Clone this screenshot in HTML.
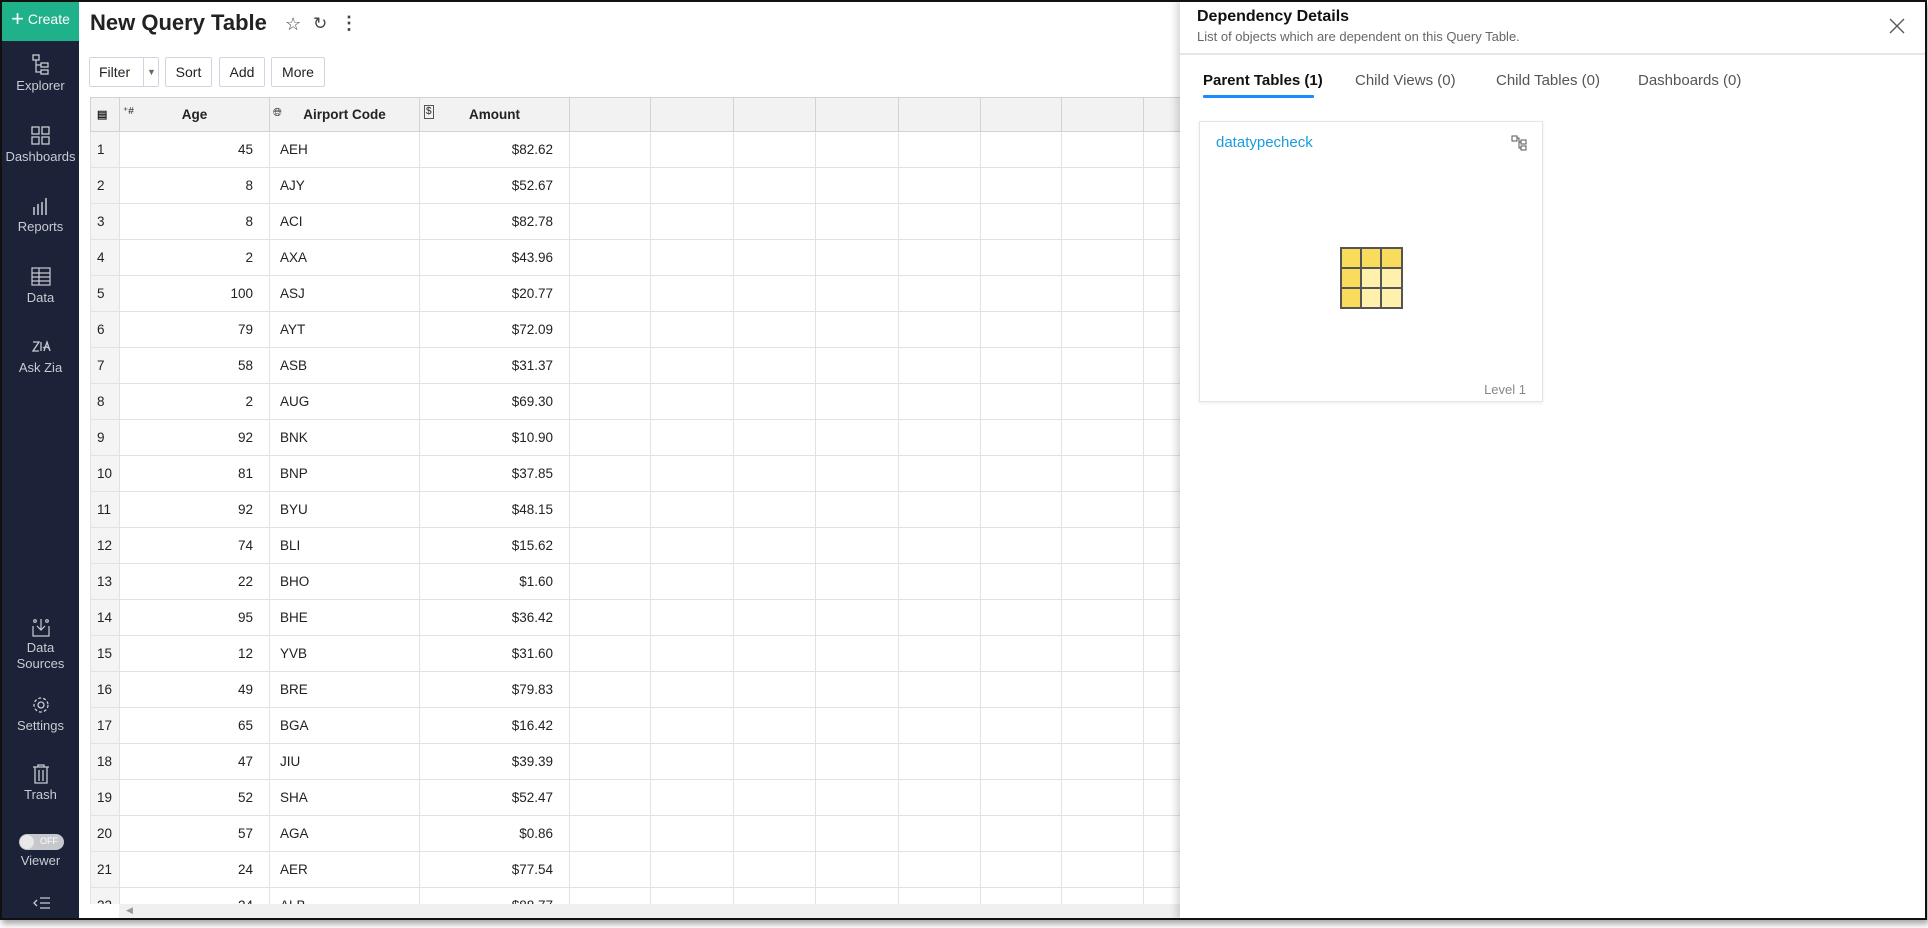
<!DOCTYPE html>
<html><head><meta charset="utf-8"><style>
*{box-sizing:border-box;margin:0;padding:0}
body{width:1928px;height:928px;background:#fff;font-family:"Liberation Sans",sans-serif;position:relative;overflow:hidden;color:#222}
#frame{position:absolute;left:0;top:0;width:1927px;height:920px;box-shadow:2px 4px 6px rgba(0,0,0,.35);overflow:hidden;background:#fff}
#bd{position:absolute;left:0;top:0;width:1927px;height:920px;border:2px solid #111;z-index:50;pointer-events:none}
#side{position:absolute;left:2px;top:0;width:77px;height:920px;background:#1c2237}
#create{position:absolute;left:0;top:0;width:77px;height:41px;background:#1fb28a;color:#fff;font-size:14px;line-height:38px;text-align:center}
.si{position:absolute;left:0;width:77px;text-align:center;color:#c9ccd4;font-size:13px;line-height:16px}
.si svg{display:block;margin:0 auto 2px}
#title{position:absolute;left:90px;top:10px;font-size:22px;font-weight:bold;color:#222}
.btn{position:absolute;top:57px;height:30px;border:1px solid #cfd6e2;border-radius:2px;font-size:14px;line-height:28px;text-align:center;color:#222;background:#fff}
#grid{position:absolute;left:90px;top:97px;width:1095px;border-collapse:collapse;table-layout:fixed;font-size:13.5px}
#grid td{height:36px;border:1px solid #e2e2e2;padding:0 10px;white-space:nowrap;overflow:hidden}
#grid tr.h td{height:34px;background:#f2f2f2;font-weight:bold;border-color:#d2d2d2}
#grid td.n{background:#f4f4f4;padding:0 0 0 6px}
#grid td.r{text-align:right;padding-right:16px}
#hs{position:absolute;left:90px;top:904px;width:1090px;height:15px;background:#f0f0f0}
#panel{position:absolute;left:1180px;top:0;width:747px;height:920px;background:#fff;box-shadow:-3px 0 8px rgba(0,0,0,.18)}
.tab{position:absolute;top:72px;font-size:15px;color:#555}
</style></head><body><div id="frame">
<div id="side">
<div id="create"><span style="font-size:22px;vertical-align:-2px">+</span> Create</div>
<div class="si" style="top:54px"><svg width="20" height="22" viewBox="0 0 20 22" fill="none" stroke="#c9ccd4" stroke-width="1.3"><rect x="2" y="1" width="6" height="5"/><rect x="10" y="9" width="7" height="4"/><rect x="10" y="16" width="7" height="4"/><path d="M5 6v12h5M5 11h5"/></svg>Explorer</div>
<div class="si" style="top:125px"><svg width="22" height="22" viewBox="0 0 22 22" fill="none" stroke="#c9ccd4" stroke-width="1.3"><rect x="2" y="2" width="7" height="7"/><rect x="12" y="2" width="7" height="7"/><rect x="2" y="12" width="7" height="7"/><rect x="12" y="12" width="7" height="7"/></svg>Dashboards</div>
<div class="si" style="top:195px"><svg width="22" height="22" viewBox="0 0 22 22" stroke="#c9ccd4" stroke-width="1.5"><path d="M4 20v-8M8 20v-11M12 20v-13M16 20v-17"/></svg>Reports</div>
<div class="si" style="top:266px"><svg width="22" height="22" viewBox="0 0 22 22" fill="none" stroke="#c9ccd4" stroke-width="1.2"><rect x="2" y="2" width="18" height="17"/><path d="M2 7h18M2 11h18M2 15h18M9 2v17"/></svg>Data</div>
<div class="si" style="top:336px"><svg width="22" height="22" viewBox="0 0 22 22" fill="none" stroke="#c9ccd4" stroke-width="1.3"><path d="M3 6h6l-6 9h6M11 6v9M14 15l3-9 3 9M13 12q4-3 7 2"/></svg>Ask Zia</div>
<div class="si" style="top:616px"><svg width="22" height="22" viewBox="0 0 22 22" fill="none" stroke="#c9ccd4" stroke-width="1.2"><path d="M3 10v10h16V10M11 3v11M7 10l4 4 4-4"/><circle cx="5" cy="5" r="1.3"/><circle cx="17" cy="5" r="1.3"/></svg>Data<br>Sources</div>
<div class="si" style="top:694px"><svg width="22" height="22" viewBox="0 0 22 22" fill="none" stroke="#c9ccd4" stroke-width="1.3"><circle cx="11" cy="11" r="3"/><circle cx="11" cy="11" r="7" stroke-dasharray="3 2"/></svg>Settings</div>
<div class="si" style="top:763px"><svg width="22" height="22" viewBox="0 0 22 22" fill="none" stroke="#c9ccd4" stroke-width="1.3"><path d="M3 4h16M8 4V2h6v2M5 4v16h12V4M9 7v11M13 7v11"/></svg>Trash</div>
<div style="position:absolute;left:17px;top:834px;width:45px;height:16px;border-radius:8px;background:#c6c8cc"><div style="position:absolute;left:1px;top:1px;width:14px;height:14px;border-radius:7px;background:#e8e8e8"></div><span style="position:absolute;right:6px;top:2px;font-size:9px;color:#fff">OFF</span></div>
<div class="si" style="top:853px">Viewer</div>
<svg style="position:absolute;left:31px;top:896px" width="18" height="14" viewBox="0 0 18 14" stroke="#c9ccd4" stroke-width="1.3" fill="none"><path d="M7 2h10M7 7h10M7 12h10M4 4L1 7l3 3"/></svg>
</div>
<div id="title">New Query Table</div>
<div style="position:absolute;left:285px;top:14px;font-size:18px;color:#444">☆</div>
<div style="position:absolute;left:313px;top:14px;font-size:17px;color:#444">↻</div>
<div style="position:absolute;left:340px;top:13px;font-size:18px;color:#444;font-weight:bold">⋮</div>
<div class="btn" style="left:89px;width:70px;text-align:left;padding-left:9px">Filter<span style="position:absolute;left:53px;top:0;height:28px;border-left:1px solid #cfd6e2;width:16px;font-size:9px;color:#666;text-align:center">▼</span></div>
<div class="btn" style="left:165px;width:47px">Sort</div>
<div class="btn" style="left:219px;width:46px">Add</div>
<div class="btn" style="left:271px;width:54px">More</div>
<table id="grid">
<colgroup><col style="width:29px"><col style="width:150px"><col style="width:150px"><col style="width:150px"><col style="width:81px"><col style="width:83px"><col style="width:82px"><col style="width:83px"><col style="width:82px"><col style="width:81px"><col style="width:82px"><col style="width:82px"></colgroup>
<tr class="h"><td class="n" style="font-size:11px;background:#f2f2f2">▤</td><td style="text-align:center;position:relative"><span style="position:absolute;left:3px;top:8px;font-size:10px;font-weight:normal">⁺#</span>Age</td><td style="text-align:center;position:relative"><span style="position:absolute;left:3px;top:9px;font-size:11px;font-weight:normal">🌐︎</span>Airport Code</td><td style="text-align:center;position:relative"><span style="position:absolute;left:4px;top:7px;font-size:10px;font-weight:normal;border:1px solid #555;padding:0 1px;line-height:12px">$</span>Amount</td><td></td><td></td><td></td><td></td><td></td><td></td><td></td><td></td></tr>
<tr><td class="n">1</td><td class="r">45</td><td>AEH</td><td class="r">$82.62</td><td></td><td></td><td></td><td></td><td></td><td></td><td></td><td></td></tr>
<tr><td class="n">2</td><td class="r">8</td><td>AJY</td><td class="r">$52.67</td><td></td><td></td><td></td><td></td><td></td><td></td><td></td><td></td></tr>
<tr><td class="n">3</td><td class="r">8</td><td>ACI</td><td class="r">$82.78</td><td></td><td></td><td></td><td></td><td></td><td></td><td></td><td></td></tr>
<tr><td class="n">4</td><td class="r">2</td><td>AXA</td><td class="r">$43.96</td><td></td><td></td><td></td><td></td><td></td><td></td><td></td><td></td></tr>
<tr><td class="n">5</td><td class="r">100</td><td>ASJ</td><td class="r">$20.77</td><td></td><td></td><td></td><td></td><td></td><td></td><td></td><td></td></tr>
<tr><td class="n">6</td><td class="r">79</td><td>AYT</td><td class="r">$72.09</td><td></td><td></td><td></td><td></td><td></td><td></td><td></td><td></td></tr>
<tr><td class="n">7</td><td class="r">58</td><td>ASB</td><td class="r">$31.37</td><td></td><td></td><td></td><td></td><td></td><td></td><td></td><td></td></tr>
<tr><td class="n">8</td><td class="r">2</td><td>AUG</td><td class="r">$69.30</td><td></td><td></td><td></td><td></td><td></td><td></td><td></td><td></td></tr>
<tr><td class="n">9</td><td class="r">92</td><td>BNK</td><td class="r">$10.90</td><td></td><td></td><td></td><td></td><td></td><td></td><td></td><td></td></tr>
<tr><td class="n">10</td><td class="r">81</td><td>BNP</td><td class="r">$37.85</td><td></td><td></td><td></td><td></td><td></td><td></td><td></td><td></td></tr>
<tr><td class="n">11</td><td class="r">92</td><td>BYU</td><td class="r">$48.15</td><td></td><td></td><td></td><td></td><td></td><td></td><td></td><td></td></tr>
<tr><td class="n">12</td><td class="r">74</td><td>BLI</td><td class="r">$15.62</td><td></td><td></td><td></td><td></td><td></td><td></td><td></td><td></td></tr>
<tr><td class="n">13</td><td class="r">22</td><td>BHO</td><td class="r">$1.60</td><td></td><td></td><td></td><td></td><td></td><td></td><td></td><td></td></tr>
<tr><td class="n">14</td><td class="r">95</td><td>BHE</td><td class="r">$36.42</td><td></td><td></td><td></td><td></td><td></td><td></td><td></td><td></td></tr>
<tr><td class="n">15</td><td class="r">12</td><td>YVB</td><td class="r">$31.60</td><td></td><td></td><td></td><td></td><td></td><td></td><td></td><td></td></tr>
<tr><td class="n">16</td><td class="r">49</td><td>BRE</td><td class="r">$79.83</td><td></td><td></td><td></td><td></td><td></td><td></td><td></td><td></td></tr>
<tr><td class="n">17</td><td class="r">65</td><td>BGA</td><td class="r">$16.42</td><td></td><td></td><td></td><td></td><td></td><td></td><td></td><td></td></tr>
<tr><td class="n">18</td><td class="r">47</td><td>JIU</td><td class="r">$39.39</td><td></td><td></td><td></td><td></td><td></td><td></td><td></td><td></td></tr>
<tr><td class="n">19</td><td class="r">52</td><td>SHA</td><td class="r">$52.47</td><td></td><td></td><td></td><td></td><td></td><td></td><td></td><td></td></tr>
<tr><td class="n">20</td><td class="r">57</td><td>AGA</td><td class="r">$0.86</td><td></td><td></td><td></td><td></td><td></td><td></td><td></td><td></td></tr>
<tr><td class="n">21</td><td class="r">24</td><td>AER</td><td class="r">$77.54</td><td></td><td></td><td></td><td></td><td></td><td></td><td></td><td></td></tr>
<tr><td class="n">22</td><td class="r">24</td><td>ALB</td><td class="r">$88.77</td><td></td><td></td><td></td><td></td><td></td><td></td><td></td><td></td></tr>
</table>
<div id="hs"><div style="position:absolute;left:0;top:0;width:29px;height:15px;background:#fff"></div><span style="position:absolute;left:36px;top:1px;font-size:9px;color:#999">◀</span></div>
<div style="position:absolute;left:79px;top:919px;width:1100px;height:4px;background:#fff"></div>
<div id="panel">
<div style="position:absolute;left:17px;top:8px;font-size:16px;font-weight:bold;color:#111">Dependency Details</div>
<div style="position:absolute;left:17px;top:29px;font-size:13px;color:#666">List of objects which are dependent on this Query Table.</div>
<svg style="position:absolute;left:709px;top:18px" width="16" height="16" viewBox="0 0 16 16" stroke="#555" stroke-width="1.3"><path d="M1 1L15 15M15 1L1 15"/></svg>
<div style="position:absolute;left:0;top:53px;width:747px;height:2px;background:#e6e6e6"></div>
<div class="tab" style="left:23px;color:#111;font-weight:bold">Parent Tables (1)</div>
<div style="position:absolute;left:23px;top:95px;width:111px;height:3px;background:#1a8cff;border-radius:1px"></div>
<div class="tab" style="left:175px">Child Views (0)</div>
<div class="tab" style="left:316px">Child Tables (0)</div>
<div class="tab" style="left:458px">Dashboards (0)</div>
<div style="position:absolute;left:19px;top:121px;width:344px;height:281px;border:1px solid #e4e4e4;box-shadow:0 1px 3px rgba(0,0,0,.08)">
<div style="position:absolute;left:16px;top:12px;font-size:15px;color:#1a9bdc">datatypecheck</div>
<svg style="position:absolute;left:311px;top:13px" width="17" height="16" viewBox="0 0 17 16" fill="none" stroke="#555" stroke-width="1"><rect x="1" y="1" width="5" height="5"/><rect x="10" y="5" width="5" height="4"/><rect x="10" y="11" width="5" height="4"/><path d="M6 3h2v10h2M8 7h2"/></svg>
<svg style="position:absolute;left:140px;top:125px" width="63" height="62" viewBox="0 0 63 62"><rect x="1" y="1" width="61" height="60" fill="#fff0ab"/><rect x="1" y="1" width="61" height="20" fill="#f9dc5c"/><rect x="1" y="1" width="20" height="60" fill="#f9dc5c"/><g fill="none" stroke="#555" stroke-width="2"><rect x="1" y="1" width="61" height="60"/><path d="M21 1v60M41 1v60M1 21h61M1 41h61"/></g></svg>
<div style="position:absolute;right:16px;top:260px;font-size:13px;color:#888">Level 1</div>
</div>
</div>
</div><div id="bd"></div></body></html>
